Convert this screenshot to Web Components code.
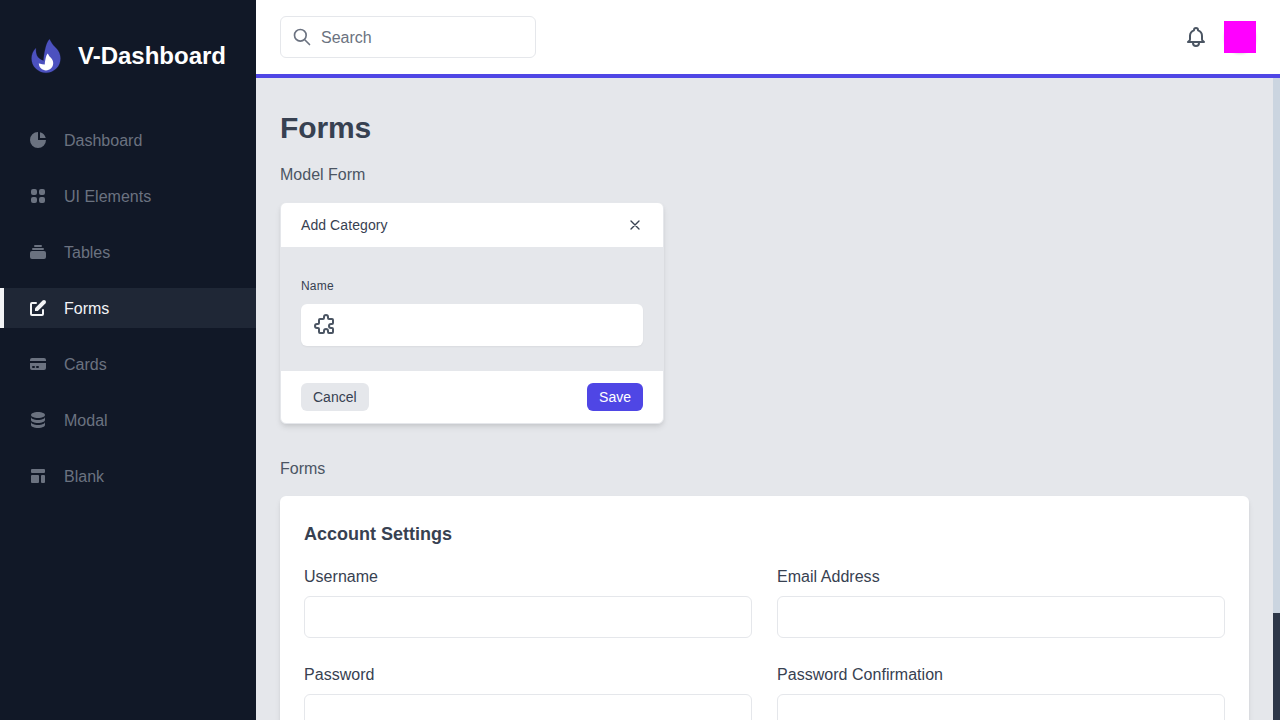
<!DOCTYPE html>
<html lang="en">
<head>
<meta charset="utf-8">
<title>V-Dashboard</title>
<style>
html,body{margin:0;height:100%;overflow:hidden}
body{font:16px/24px "Liberation Sans",Arial,sans-serif;color:#374151}
</style>
</head>
<body>
<v-app>
  <v-sidebar slot="sidebar">
    <v-nav-item icon="chart">Dashboard</v-nav-item>
    <v-nav-item icon="grid">UI Elements</v-nav-item>
    <v-nav-item icon="stack">Tables</v-nav-item>
    <v-nav-item icon="edit" active>Forms</v-nav-item>
    <v-nav-item icon="card">Cards</v-nav-item>
    <v-nav-item icon="database">Modal</v-nav-item>
    <v-nav-item icon="layout">Blank</v-nav-item>
  </v-sidebar>
  <v-header slot="header"></v-header>
  <v-forms-page></v-forms-page>
</v-app>
<script>
const define = (name, html, setup) => {
  const template = document.createElement('template');
  template.innerHTML = `<style>*{box-sizing:border-box}:host{box-sizing:border-box}</style>` + html;
  customElements.define(name, class extends HTMLElement {
    constructor() {
      super();
      this.attachShadow({mode: 'open'}).append(template.content.cloneNode(true));
    }
    connectedCallback() { if (setup) setup(this, this.shadowRoot); }
  });
};

const solid = (...paths) => ({box: 20, attrs: 'fill="currentColor" fill-rule="evenodd" clip-rule="evenodd"', paths});
const line = (...paths) => ({box: 24, attrs: 'fill="none" stroke="currentColor" stroke-width="2" stroke-linecap="round" stroke-linejoin="round"', paths});
const icons = {
  chart: solid('M2 10a8 8 0 018-8v8h8a8 8 0 11-16 0z', 'M12 2.252A8.014 8.014 0 0117.748 8H12V2.252z'),
  grid: solid('M5 3a2 2 0 00-2 2v2a2 2 0 002 2h2a2 2 0 002-2V5a2 2 0 00-2-2H5zM5 11a2 2 0 00-2 2v2a2 2 0 002 2h2a2 2 0 002-2v-2a2 2 0 00-2-2H5zM11 5a2 2 0 012-2h2a2 2 0 012 2v2a2 2 0 01-2 2h-2a2 2 0 01-2-2V5zM11 13a2 2 0 012-2h2a2 2 0 012 2v2a2 2 0 01-2 2h-2a2 2 0 01-2-2v-2z'),
  stack: solid('M7 3a1 1 0 000 2h6a1 1 0 100-2H7zM4 7a1 1 0 011-1h10a1 1 0 110 2H5a1 1 0 01-1-1zM2 11a2 2 0 012-2h12a2 2 0 012 2v4a2 2 0 01-2 2H4a2 2 0 01-2-2v-4z'),
  edit: solid('M17.414 2.586a2 2 0 00-2.828 0L7 10.172V13h2.828l7.586-7.586a2 2 0 000-2.828z', 'M2 6a2 2 0 012-2h4a1 1 0 010 2H4v10h10v-4a1 1 0 112 0v4a2 2 0 01-2 2H4a2 2 0 01-2-2V6z'),
  card: solid('M4 4a2 2 0 00-2 2v1h16V6a2 2 0 00-2-2H4z', 'M18 9H2v5a2 2 0 002 2h12a2 2 0 002-2V9zM4 13a1 1 0 011-1h1a1 1 0 110 2H5a1 1 0 01-1-1zm5-1a1 1 0 100 2h1a1 1 0 100-2H9z'),
  database: solid('M3 12v3c0 1.657 3.134 3 7 3s7-1.343 7-3v-3c0 1.657-3.134 3-7 3s-7-1.343-7-3z', 'M3 7v3c0 1.657 3.134 3 7 3s7-1.343 7-3V7c0 1.657-3.134 3-7 3S3 8.657 3 7z', 'M17 5c0 1.657-3.134 3-7 3S3 6.657 3 5s3.134-3 7-3 7 1.343 7 3z'),
  layout: solid('M3 4a1 1 0 011-1h12a1 1 0 011 1v2a1 1 0 01-1 1H4a1 1 0 01-1-1V4zM3 10a1 1 0 011-1h6a1 1 0 011 1v6a1 1 0 01-1 1H4a1 1 0 01-1-1v-6zM14 9a1 1 0 00-1 1v6a1 1 0 001 1h2a1 1 0 001-1v-6a1 1 0 00-1-1h-2z'),
  search: line('M21 21L15 15M17 10C17 13.866 13.866 17 10 17C6.134 17 3 13.866 3 10C3 6.134 6.134 3 10 3C13.866 3 17 6.134 17 10Z'),
  bell: line('M15 17H20L18.5951 15.5951C18.2141 15.2141 18 14.6973 18 14.1585V11C18 8.38757 16.3304 6.16509 14 5.34142V5C14 3.89543 13.1046 3 12 3C10.8954 3 10 3.89543 10 5V5.34142C7.66962 6.16509 6 8.38757 6 11V14.1585C6 14.6973 5.78595 15.2141 5.40493 15.5951L4 17H9M15 17V18C15 19.6569 13.6569 21 12 21C10.3431 21 9 19.6569 9 18V17M15 17H9'),
  puzzle: line('M11 4a2 2 0 114 0v1a1 1 0 001 1h3a1 1 0 011 1v3a1 1 0 01-1 1h-1a2 2 0 100 4h1a1 1 0 011 1v3a1 1 0 01-1 1h-3a1 1 0 01-1-1v-1a2 2 0 10-4 0v1a1 1 0 01-1 1H7a1 1 0 01-1-1v-3a1 1 0 00-1-1H4a2 2 0 110-4h1a1 1 0 001-1V7a1 1 0 011-1h3a1 1 0 001-1V4z'),
  close: line('M6 18L18 6M6 6l12 12')
};

define('v-icon', `<style>:host{display:block;flex:none;width:20px;height:20px}div{height:100%}svg{display:block;width:100%;height:100%}</style><div></div>`, (host, root) => {
  const icon = icons[host.getAttribute('name')];
  if (!icon) return;
  root.querySelector('div').innerHTML = `<svg viewBox="0 0 ${icon.box} ${icon.box}">${icon.paths.map(d => `<path ${icon.attrs} d="${d}"/>`).join('')}</svg>`;
});

define('v-nav-item', `<style>
  :host{display:flex;align-items:center;height:40px;padding:0 24px;border-left:4px solid #111827;color:#6b7280}
  :host([active]){background:rgba(75,85,99,.25);border-color:#f3f4f6;color:#f3f4f6}
  span{margin-left:16px;padding-top:2px;line-height:22px}
</style><div class="icon"></div><span><slot></slot></span>`, (host, root) => {
  const icon = document.createElement('v-icon');
  icon.setAttribute('name', host.getAttribute('icon'));
  root.querySelector('.icon').replaceChildren(icon);
});

define('v-sidebar', `<style>
  :host{display:block;height:100%;background:#111827}
  .brand{display:flex;align-items:center;justify-content:center;padding-top:32px}
  svg{width:48px;height:48px}
  .brand span{margin:0 8px;font-size:24px;line-height:32px;font-weight:700;color:#fff}
  nav{display:flex;flex-direction:column;gap:16px;margin-top:40px}
</style>
<div class="brand">
  <svg viewBox="0 0 512 512"><path d="M364.61 390.213C304.625 450.196 207.37 450.196 147.386 390.213C117.394 360.22 102.398 320.911 102.398 281.6C102.398 242.291 117.394 202.981 147.386 172.989C147.386 230.4 153.6 281.6 230.4 307.2C230.4 256 256 102.4 294.4 76.8C320 128 334.618 142.997 364.608 172.989C394.601 202.981 409.597 242.291 409.597 281.6C409.597 320.911 394.601 360.22 364.61 390.213Z" fill="#4C51BF" stroke="#4C51BF" stroke-width="2"/><path d="M201.694 387.105C231.686 417.098 280.312 417.098 310.305 387.105C325.301 372.109 332.8 352.456 332.8 332.8C332.8 313.144 325.301 293.491 310.305 278.495C295.309 263.498 288 256 275.2 230.4C256 243.2 243.201 320 243.201 345.6C201.694 345.6 179.2 332.8 179.2 332.8C179.2 352.456 186.698 372.109 201.694 387.105Z" fill="#fff"/></svg>
  <span>V-Dashboard</span>
</div>
<nav><slot></slot></nav>`);

define('v-header', `<style>
  :host{display:flex;align-items:center;justify-content:space-between;height:78px;padding:0 24px;background:#fff;border-bottom:4px solid #4f46e5}
  .search{display:flex;align-items:center;width:256px;height:42px;padding-left:11px;border:1px solid #e5e7eb;border-radius:6px;color:#6b7280}
  .search span{margin-left:9px;padding-top:2px;line-height:22px}
  .actions{display:flex;align-items:center;gap:16px;color:#4b5563}
  .bell{width:24px;height:24px}
  .avatar{width:32px;height:32px;border-radius:50%;box-shadow:0 1px 3px rgba(0,0,0,.1),0 1px 2px rgba(0,0,0,.06)}
  .avatar div{height:32px;background:#f0f}
</style>
<div class="search"><v-icon name="search"></v-icon><span>Search</span></div>
<div class="actions"><v-icon class="bell" name="bell"></v-icon><div class="avatar"><div></div></div></div>`);

define('v-button', `<style>
  :host{display:block;padding:4px 12px;border-radius:6px;font-size:14px;line-height:20px;background:#e5e7eb;color:#374151}
  :host([primary]){background:#4f46e5;color:#fff}
</style><slot></slot>`);

define('v-modal-form', `<style>
  :host{display:block;width:384px;border:1px solid #e5e7eb;border-radius:6px;overflow:hidden;background:#fff;box-shadow:0 4px 6px -1px rgba(0,0,0,.1),0 2px 4px -1px rgba(0,0,0,.06)}
  header,footer{display:flex;align-items:center;justify-content:space-between;padding:0 20px}
  header{height:44px;font-size:14px;line-height:20px;letter-spacing:.08px}
  header v-icon{width:16px;height:16px}
  footer{height:52px}
  section{height:124px;padding:31px 20px 25px;background:#e5e7eb}
  label{display:block;font-size:12px;line-height:16px;letter-spacing:.2px}
  .input{display:flex;align-items:center;height:42px;margin-top:10px;padding-left:12px;border-radius:6px;background:#fff;color:#4b5563;box-shadow:0 1px 2px rgba(0,0,0,.05)}
  .input v-icon{width:24px;height:24px}
</style>
<header><span>Add Category</span><v-icon name="close"></v-icon></header>
<section><label>Name</label><div class="input"><v-icon name="puzzle"></v-icon></div></section>
<footer><v-button>Cancel</v-button><v-button primary>Save</v-button></footer>`);

define('v-field', `<style>
  :host{display:block}
  label{display:block;padding-top:2px;line-height:22px;letter-spacing:.03px}
  input{display:block;width:100%;height:42px;margin:8px 0 0;border:1px solid #e5e7eb;border-radius:6px;background:#fff}
</style><label><slot></slot></label><input>`);

define('v-settings-card', `<style>
  :host{display:block;padding:24px;border-radius:6px;background:#fff;box-shadow:0 4px 6px -1px rgba(0,0,0,.1),0 2px 4px -1px rgba(0,0,0,.06)}
  h2{margin:0;font-size:18px;line-height:28px;font-weight:700}
  .fields{display:grid;grid-template-columns:1fr 1fr;gap:24px 25px;margin-top:16px}
</style>
<h2>Account Settings</h2>
<div class="fields"><v-field>Username</v-field><v-field>Email Address</v-field><v-field>Password</v-field><v-field>Password Confirmation</v-field></div>`);

define('v-forms-page', `<style>
  :host{display:block;padding:32px 24px}
  h1{margin:0;font-size:30px;line-height:36px;font-weight:700;letter-spacing:-.1px}
  h4{margin:16px 0;padding-top:2px;font-size:16px;line-height:22px;font-weight:400;color:#4b5563}
  h4.second{margin-top:32px}
</style>
<h1>Forms</h1>
<h4>Model Form</h4><v-modal-form></v-modal-form>
<h4 class="second">Forms</h4><v-settings-card></v-settings-card>`);

define('v-app', `<style>
  :host{display:grid;grid-template-columns:256px minmax(0,1fr);height:720px;width:1280px;overflow:hidden;background:#e5e7eb}
  .main{display:flex;flex-direction:column;height:720px;min-width:0}
  .view{display:grid;grid-template-columns:minmax(0,1fr) 7px;flex:1;min-height:0}
  .page{overflow:hidden}
  .track{display:flex;flex-direction:column;justify-content:flex-end;background:#cbd5e0}
  .thumb{height:107px;background:#2d3748}
</style>
<slot name="sidebar"></slot>
<div class="main"><slot name="header"></slot><div class="view"><div class="page"><slot></slot></div><div class="track"><div class="thumb"></div></div></div></div>`);
</script>
</body>
</html>
